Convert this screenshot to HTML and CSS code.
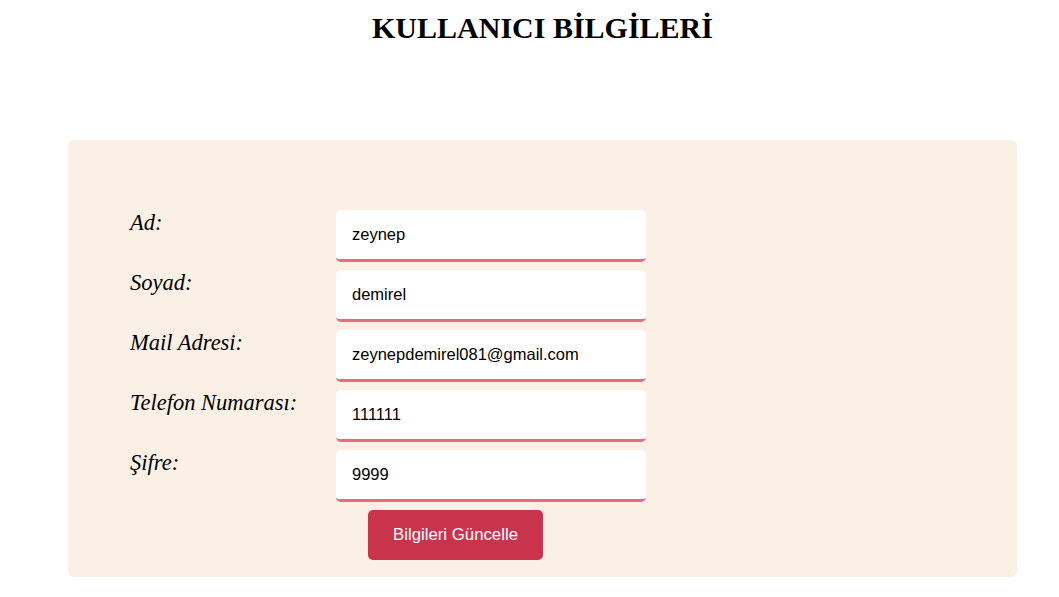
FILE: index.html
```html
<!DOCTYPE html>
<html lang="tr">
<head>
<meta charset="utf-8">
<title>Kullanıcı Bilgileri</title>
<link rel="stylesheet" href="styles.css">
</head>
<body>
<h1 class="title">KULLANICI BİLGİLERİ</h1>
<div class="panel">
  <form class="form">
    <label class="label" for="ad">Ad:</label>
    <input class="field" id="ad" type="text" value="zeynep">
    <label class="label" for="soyad">Soyad:</label>
    <input class="field" id="soyad" type="text" value="demirel">
    <label class="label" for="mail">Mail Adresi:</label>
    <input class="field" id="mail" type="text" value="zeynepdemirel081@gmail.com">
    <label class="label" for="tel">Telefon Numarası:</label>
    <input class="field" id="tel" type="text" value="111111">
    <label class="label" for="sifre">Şifre:</label>
    <input class="field" id="sifre" type="text" value="9999">
    <div class="actions">
      <button class="btn" type="button">Bilgileri Güncelle</button>
    </div>
  </form>
</div>
</body>
</html>
```
FILE: styles.css
```css
html, body {
  margin: 0;
  padding: 0;
  background: #ffffff;
}
body {
  font-family: "Liberation Serif", "Times New Roman", serif;
  color: #000;
}
.title {
  margin: 0;
  padding: 11px 0 0 26px;
  font-size: 30px;
  font-weight: bold;
  text-align: center;
  line-height: 34px;
}
.panel {
  margin: 95px 42px 0 68px;
  background: #faf0e6;
  border-radius: 6px;
  padding: 70px 0 17px 62px;
}
.form {
  display: grid;
  grid-template-columns: 206px 310px;
  row-gap: 8px;
}
.label {
  font-style: italic;
  font-size: 22.5px;
  line-height: 26px;
  padding-top: 0;
}
.field {
  box-sizing: border-box;
  height: 52px;
  width: 310px;
  border: none;
  border-bottom: 3px solid #e36e7e;
  border-radius: 5px;
  background: #fff;
  padding: 0 16px;
  font-family: "Liberation Sans", Arial, sans-serif;
  font-size: 16.5px;
  color: #000;
  outline: none;
}
.actions {
  grid-column: 2;
  padding-left: 32px;
}
.btn {
  width: 175px;
  height: 50px;
  border: none;
  border-radius: 5px;
  background: #c9334b;
  color: #fff;
  font-family: "Liberation Sans", Arial, sans-serif;
  font-size: 16.8px;
  cursor: pointer;
}
```
